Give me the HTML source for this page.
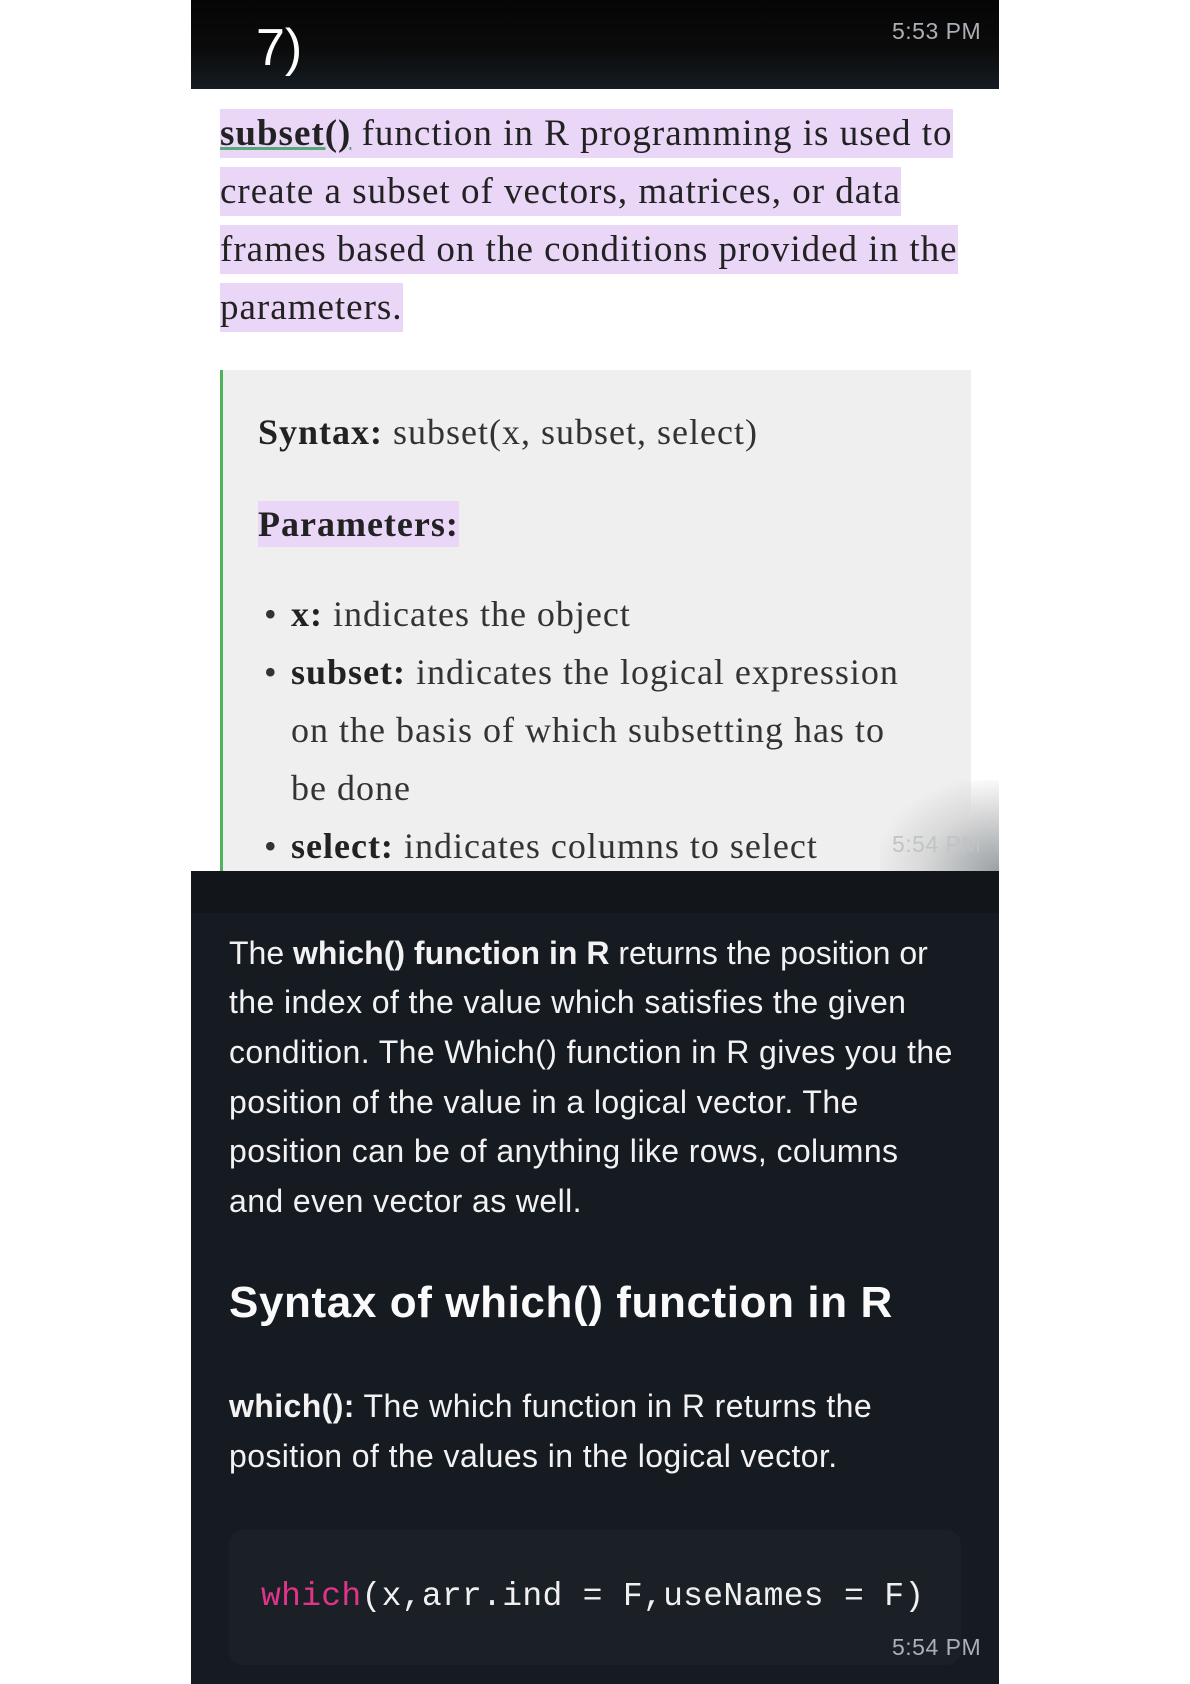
<!DOCTYPE html>
<html><head><meta charset="utf-8"><style>
body{margin:0;width:1190px;height:1684px;background:#fff;position:relative;overflow:hidden}
.a{position:absolute;white-space:nowrap}
.hdr{left:191px;top:0;width:808px;height:89px;background:linear-gradient(#050505 0,#0b0b0b 55%,#151c22 100%)}
.ser{font-family:"Liberation Serif",serif;font-size:37px;color:#222;letter-spacing:1px}
.hl{background:#ead6f7;padding:4px 0}
.sans{font-family:"Liberation Sans",sans-serif;color:#f2f2f2;font-size:32px;letter-spacing:0.4px}
.t{font-family:"Liberation Sans",sans-serif;font-size:23px;color:#aab0b6;letter-spacing:0.5px}
</style></head><body>
<div class="a hdr"></div>
<div class="a" style="left:256px;top:18px;font-family:'Liberation Sans',sans-serif;font-size:52px;color:#fff">7)</div>
<div class="a t" style="left:892px;top:18px">5:53 PM</div>

<div class="a ser" style="left:220px;top:112px"><span class="hl"><b style="text-decoration:underline;text-decoration-color:#5aa878">subset()</b> function in R programming is used to</span></div>
<div class="a ser" style="left:220px;top:170px"><span class="hl">create a subset of vectors, matrices, or data</span></div>
<div class="a ser" style="left:220px;top:228px"><span class="hl">frames based on the conditions provided in the</span></div>
<div class="a ser" style="left:220px;top:286px"><span class="hl">parameters.</span></div>

<div class="a" style="left:220px;top:370px;width:748px;height:501px;background:#efefef;border-left:3px solid #4cb35a"></div>
<div class="a" style="left:880px;top:780px;width:119px;height:91px;background:radial-gradient(ellipse at 100% 100%,#9aa0a4 0,#d8d8d8 45%,rgba(239,239,239,0) 75%)"></div>
<div class="a ser" style="left:258px;top:411px;color:#333;font-size:36px"><b style="color:#222">Syntax:</b> subset(x, subset, select)</div>
<div class="a ser" style="left:258px;top:503px;font-size:36px"><span class="hl" style="padding:3px 0"><b>Parameters:</b></span></div>
<div class="a ser" style="left:264px;top:593px;font-size:36px;color:#333">•</div>
<div class="a ser" style="left:291px;top:593px;font-size:36px;color:#333"><b style="color:#222">x:</b> indicates the object</div>
<div class="a ser" style="left:264px;top:651px;font-size:36px;color:#333">•</div>
<div class="a ser" style="left:291px;top:651px;font-size:36px;color:#333"><b style="color:#222">subset:</b> indicates the logical expression</div>
<div class="a ser" style="left:291px;top:709px;font-size:36px;color:#333">on the basis of which subsetting has to</div>
<div class="a ser" style="left:291px;top:767px;font-size:36px;color:#333">be done</div>
<div class="a ser" style="left:264px;top:825px;font-size:36px;color:#333">•</div>
<div class="a ser" style="left:291px;top:825px;font-size:36px;color:#333"><b style="color:#222">select:</b> indicates columns to select</div>
<div class="a t" style="left:892px;top:831px;color:#bfc4c6">5:54 PM</div>

<div class="a" style="left:191px;top:871px;width:808px;height:813px;background:#161a21"></div>
<div class="a" style="left:191px;top:871px;width:808px;height:42px;background:#12161b"></div>
<div class="a sans" style="left:229px;top:935px"><span style="letter-spacing:0">The <b>which() function in R</b> returns the position or</span></div>
<div class="a sans" style="left:229px;top:984px">the index of the value which satisfies the given</div>
<div class="a sans" style="left:229px;top:1034px">condition. The Which() function in R gives you the</div>
<div class="a sans" style="left:229px;top:1084px">position of the value in a logical vector. The</div>
<div class="a sans" style="left:229px;top:1133px">position can be of anything like rows, columns</div>
<div class="a sans" style="left:229px;top:1183px">and even vector as well.</div>
<div class="a sans" style="left:229px;top:1278px;font-size:44px;font-weight:bold;color:#fafafa;letter-spacing:0.6px">Syntax of which() function in R</div>
<div class="a sans" style="left:229px;top:1388px"><b>which():</b> The which function in R returns the</div>
<div class="a sans" style="left:229px;top:1438px">position of the values in the logical vector.</div>
<div class="a" style="left:229px;top:1530px;width:732px;height:135px;background:#1b2027;border-radius:14px"></div>
<div class="a" style="left:261px;top:1578px;font-family:'Liberation Mono',monospace;font-size:33px;color:#f0f0f0;letter-spacing:0.3px"><span style="color:#e0348a">which</span>(x,arr.ind = F,useNames = F)</div>
<div class="a t" style="left:892px;top:1634px">5:54 PM</div>
</body></html>
